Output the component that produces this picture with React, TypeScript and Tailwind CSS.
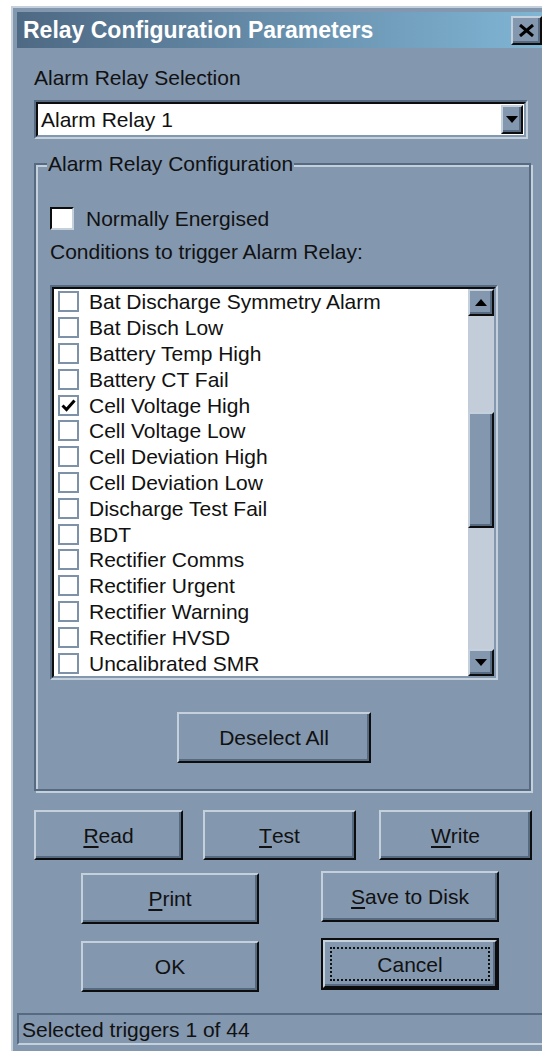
import React from "react";

type Trigger = { label: string; on: boolean };

const triggers: Trigger[] = [
  { label: "Bat Discharge Symmetry Alarm", on: false },
  { label: "Bat Disch Low", on: false },
  { label: "Battery Temp High", on: false },
  { label: "Battery CT Fail", on: false },
  { label: "Cell Voltage High", on: true },
  { label: "Cell Voltage Low", on: false },
  { label: "Cell Deviation High", on: false },
  { label: "Cell Deviation Low", on: false },
  { label: "Discharge Test Fail", on: false },
  { label: "BDT", on: false },
  { label: "Rectifier Comms", on: false },
  { label: "Rectifier Urgent", on: false },
  { label: "Rectifier Warning", on: false },
  { label: "Rectifier HVSD", on: false },
  { label: "Uncalibrated SMR", on: false },
];

const raised =
  "flex items-center justify-center bg-[#8397af] border-2 border-t-[#c4d0dc] border-l-[#c4d0dc] border-r-[#0d0d0d] border-b-[#0d0d0d] shadow-[inset_-2px_-2px_0_#566a81]";

function Btn({
  children,
  className,
  focused,
}: {
  children: React.ReactNode;
  className: string;
  focused?: boolean;
}) {
  if (focused) {
    return (
      <div className={`border-2 border-[#0d0d0d] ${className}`}>
        <div className={`${raised} h-full w-full p-[5px]`}>
          <div className="flex h-full w-full items-center justify-center border-2 border-dotted border-[#111]">
            {children}
          </div>
        </div>
      </div>
    );
  }
  return <div className={`${raised} ${className}`}>{children}</div>;
}

function Arrow({ up }: { up?: boolean }) {
  return (
    <svg width="12" height="7" viewBox="0 0 12 7">
      <polygon points={up ? "6,0 12,7 0,7" : "0,0 12,0 6,7"} fill="#000" />
    </svg>
  );
}

function Sunken({
  className,
  children,
}: {
  className: string;
  children: React.ReactNode;
}) {
  return (
    <div
      className={`border-2 border-t-[#566a81] border-l-[#566a81] border-r-[#c4d0dc] border-b-[#c4d0dc] ${className}`}
    >
      <div className="flex h-full w-full border-2 border-t-[#0d0d0d] border-l-[#0d0d0d] border-r-[#8397af] border-b-[#8397af] bg-white">
        {children}
      </div>
    </div>
  );
}

export default function App() {
  return (
    <div className="h-[1051px] overflow-hidden bg-white pl-[11px] pt-[6px] font-['Liberation_Sans','Arial',sans-serif] text-[21px] leading-none text-[#111]">
      <div className="flex h-[1045px] flex-col border-l-2 border-t-2 border-[#c4d0dc] bg-[#8397af]">
        {/* title bar */}
        <div className="ml-[4px] mt-[4px] flex h-[36px] items-center justify-between bg-linear-to-r from-[#4e6984] to-[#80b5d4] pl-[6px]">
          <span className="text-[23px] font-bold text-white">
            Relay Configuration Parameters
          </span>
          <div className={`${raised} h-[29px] w-[31px]`}>
            <svg width="15" height="13" viewBox="0 0 15 13">
              <path d="M1 1 L14 12 M14 1 L1 12" stroke="#000" strokeWidth="3" />
            </svg>
          </div>
        </div>

        <div className="flex flex-col pl-[21px] pr-[10px]">
          <div className="mt-[18px] h-[24px] leading-[24px]">Alarm Relay Selection</div>

          <Sunken className="mt-[10px] h-[39px] w-[494px]">
            <div className="flex flex-1 items-center pl-[3px]">Alarm Relay 1</div>
            <div className={`${raised} my-[1px] mr-[1px] w-[22px]`}>
              <Arrow />
            </div>
          </Sunken>

          <fieldset className="mt-[13px] w-[497px] border-2 border-[#566a81] pb-[26px] pl-[14px] shadow-[inset_2px_2px_0_#c4d0dc,2px_2px_0_#c4d0dc]">
            <legend className="-ml-[3px] h-[24px] bg-[#8397af] px-[1px] leading-[24px]">
              Alarm Relay Configuration
            </legend>

            <div className="mt-[31px] flex h-[23px] items-center">
              <div className="h-[23px] w-[24px] border-2 border-t-[#0d0d0d] border-l-[#0d0d0d] border-r-[#c4d0dc] border-b-[#c4d0dc] bg-white" />
              <span className="ml-[12px]">Normally Energised</span>
            </div>

            <div className="mt-[10px] h-[24px] leading-[24px]">
              Conditions to trigger Alarm Relay:
            </div>

            <Sunken className="mt-[21px] h-[395px] w-[448px]">
              <div className="flex flex-1 flex-col">
                {triggers.map((t) => (
                  <div key={t.label} className="flex h-[26px] items-center pl-[4px]">
                    <div className="flex h-[21px] w-[21px] items-center justify-center border-2 border-[#7d91a9] bg-white">
                      {t.on && (
                        <svg width="15" height="13" viewBox="0 0 15 13">
                          <path
                            d="M1.5 6.5 L5.5 10.5 L13.5 1.5"
                            stroke="#000"
                            strokeWidth="3"
                            fill="none"
                          />
                        </svg>
                      )}
                    </div>
                    <span className="ml-[10px]">{t.label}</span>
                  </div>
                ))}
              </div>
              {/* scroll bar */}
              <div className="flex w-[26px] flex-col bg-[#c2cdd9]">
                <div className={`${raised} h-[27px]`}>
                  <Arrow up />
                </div>
                <div className="h-[96px]" />
                <div className={`${raised} h-[116px]`} />
                <div className="flex-1" />
                <div className={`${raised} h-[27px]`}>
                  <Arrow />
                </div>
              </div>
            </Sunken>

            <Btn className="ml-[127px] mt-[32px] h-[51px] w-[194px]">Deselect All</Btn>
          </fieldset>

          <div className="mt-[19px] flex">
            <Btn className="h-[50px] w-[149px]">
              <span className="underline underline-offset-[3px]">R</span>ead
            </Btn>
            <Btn className="ml-[20px] h-[50px] w-[153px]">
              <span className="underline underline-offset-[3px]">T</span>est
            </Btn>
            <Btn className="ml-[23px] h-[50px] w-[153px]">
              <span className="underline underline-offset-[3px]">W</span>rite
            </Btn>
          </div>

          <div className="mt-[11px] flex items-start">
            <Btn className="ml-[47px] mt-[2px] h-[51px] w-[178px]">
              <span className="underline underline-offset-[3px]">P</span>rint
            </Btn>
            <Btn className="ml-[62px] h-[51px] w-[178px]">
              <span className="underline underline-offset-[3px]">S</span>ave to Disk
            </Btn>
          </div>

          <div className="mt-[14px] flex items-start">
            <Btn className="ml-[47px] mt-[3px] h-[51px] w-[178px]">OK</Btn>
            <Btn focused className="ml-[62px] h-[52px] w-[178px]">
              Cancel
            </Btn>
          </div>
        </div>

        {/* status bar */}
        <div className="-mr-[8px] ml-[4px] mt-[21px] flex h-[32px] items-center border-2 border-t-[#566a81] border-l-[#566a81] border-r-[#c4d0dc] border-b-[#c4d0dc] pl-[3px]">
          Selected triggers 1 of 44
        </div>
      </div>
    </div>
  );
}
